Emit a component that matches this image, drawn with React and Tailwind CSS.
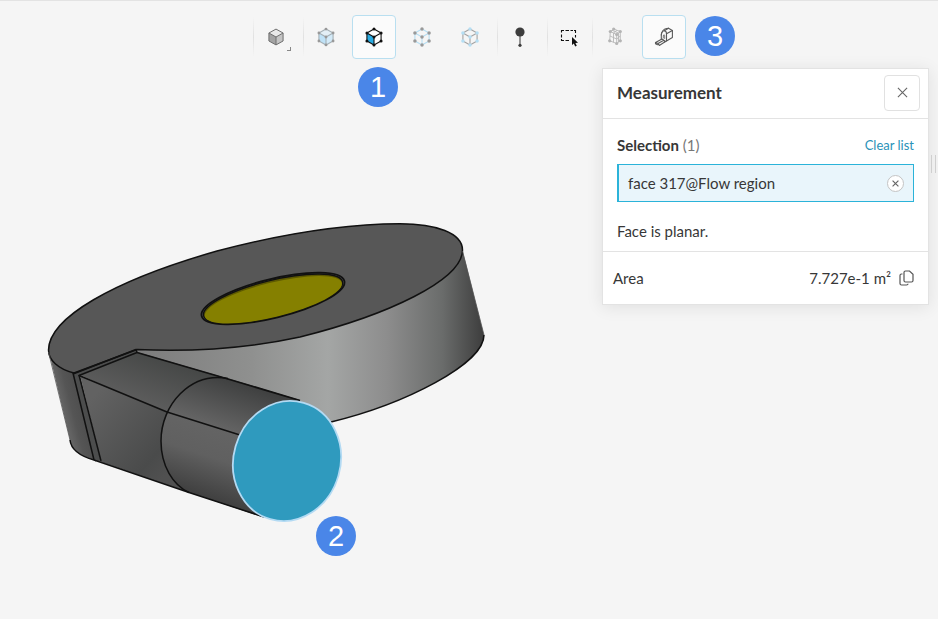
import React from "react";

const RIM =
  "M74 373C58 369 48.5 360 48.5 350C49 318 112 281 217 251C285 233 345 224 400 223.7C436 223.7 462.5 233 462.5 250C462.5 280 388 315 300 337C245 349 195 352 137 349.5Z";
const RING = "M228 378.5C190 372 161 405 161 441C161 466 173 485 189 492.5";

function Model() {
  return (
    <svg
      className="absolute left-10 top-[214px] h-[320px] w-[460px]"
      viewBox="40 215 460 320"
      role="img"
      aria-label="Flow region model"
    >
      <defs>
        <linearGradient id="wall" gradientUnits="userSpaceOnUse" x1="137" y1="0" x2="484" y2="0">
          <stop offset="0" stopColor="#7c7c7c" />
          <stop offset="0.33" stopColor="#8f908f" />
          <stop offset="0.55" stopColor="#a4a6a5" />
          <stop offset="0.72" stopColor="#8d8d8d" />
          <stop offset="0.88" stopColor="#6a6c6b" />
          <stop offset="1" stopColor="#3d3d3d" />
        </linearGradient>
        <linearGradient id="left" gradientUnits="userSpaceOnUse" x1="52" y1="410" x2="90" y2="400">
          <stop offset="0" stopColor="#777777" />
          <stop offset="0.5" stopColor="#555555" />
          <stop offset="1" stopColor="#484848" />
        </linearGradient>
        <linearGradient id="ductTop" gradientUnits="userSpaceOnUse" x1="185" y1="362" x2="165" y2="415">
          <stop offset="0" stopColor="#444645" />
          <stop offset="1" stopColor="#5e5e5e" />
        </linearGradient>
        <linearGradient id="ductSide" gradientUnits="userSpaceOnUse" x1="90" y1="400" x2="170" y2="470">
          <stop offset="0" stopColor="#626262" />
          <stop offset="0.8" stopColor="#4a4b4b" />
          <stop offset="1" stopColor="#505050" />
        </linearGradient>
        <linearGradient id="pipe" gradientUnits="userSpaceOnUse" x1="250" y1="387" x2="212" y2="502">
          <stop offset="0" stopColor="#404141" />
          <stop offset="0.4" stopColor="#646464" />
          <stop offset="0.65" stopColor="#606060" />
          <stop offset="1" stopColor="#3e3e3e" />
        </linearGradient>
      </defs>
      <path d="M137 349L462.5 250L484 335C484 364 405 404 331 422L290 410L137 355Z" fill="url(#wall)" />
      <path d="M48.5 350L70 440C71 450 80 456 94 460L96 462L74 373Z" fill="url(#left)" />
      <path d="M73 373L94 460L101 462L80 375L137 353L137 349Z" fill="#4c4d4d" />
      <path d="M80 375L137 352L228 378.5L193 390L167 414Z" fill="url(#ductTop)" />
      <path d="M80 375L167 412L175 440L189 492.5L101 462Z" fill="url(#ductSide)" />
      <path d={`${RING}L262 517L300 470L300 400Z`} fill="url(#pipe)" />
      <path d={RIM} fill="#575757" />
      <g fill="none" stroke="#111" strokeWidth="1.5" strokeLinejoin="round">
        <path d={RIM} />
        <path d="M484 335C484 364 405 404 331 422" />
        <path d="M70 440C71 450 80 456 94 460L189 492.5L264 517" />
        <path d={RING} />
        <path d="M73 374L136 349.5L137 352.5L79 375.5L167 412L240 435" />
        <path d="M73 373L94 460M79 375L101 461" />
        <path d="M137 352.5L228 379L300 400.5" strokeWidth="1.8" />
      </g>
      <path d="M48.5 352L70 440M462.5 251L484 335" fill="none" stroke="#555" strokeWidth="0.8" />
      <g transform="rotate(-13.8 273 298.5)">
        <ellipse cx="273" cy="298.5" rx="73.5" ry="19.5" fill="#555" stroke="#111" strokeWidth="1.8" />
        <ellipse cx="273" cy="298.8" rx="71.5" ry="18.5" fill="#5d5900" stroke="#111" strokeWidth="1.4" />
        <ellipse cx="273" cy="299.8" rx="70.5" ry="17.2" fill="#858000" />
      </g>
      <ellipse
        cx="287"
        cy="461"
        rx="53.5"
        ry="60.5"
        transform="rotate(16 287 461)"
        fill="#2f9abe"
        stroke="#b3daf3"
        strokeWidth="1.8"
      />
    </svg>
  );
}

const HEX = [[12, 2.5], [20.5, 7.2], [20.5, 16.8], [12, 21.5], [3.5, 16.8], [3.5, 7.2], [12, 12]];

function Cube({ line, dot, top = "none", left = "none", right = "none", r = 1.7, width = 1.3 }) {
  return (
    <svg className="size-5" viewBox="0 0 24 24" aria-hidden="true">
      <path d="M12 2.5L20.5 7.2L12 12L3.5 7.2Z" fill={top} />
      <path d="M3.5 7.2L12 12V21.5L3.5 16.8Z" fill={left} />
      <path d="M20.5 7.2L12 12V21.5L20.5 16.8Z" fill={right} />
      <path
        d="M12 2.5L20.5 7.2V16.8L12 21.5L3.5 16.8V7.2ZM3.5 7.2L12 12L20.5 7.2M12 12V21.5"
        fill="none"
        stroke={line}
        strokeWidth={width}
        strokeLinejoin="round"
      />
      {dot && HEX.map(([x, y]) => <circle key={`${x}-${y}`} cx={x} cy={y} r={r} fill={dot} />)}
    </svg>
  );
}

function PinIcon() {
  return (
    <svg className="h-5 w-3" viewBox="0 0 12 20" aria-hidden="true">
      <path d="M6 5V18" stroke="#444" strokeWidth="1.1" />
      <circle cx="6" cy="5" r="4.6" fill="#3d3d3d" />
      <circle cx="6" cy="18.3" r="1.6" fill="#3d3d3d" />
    </svg>
  );
}

function BoxSelectIcon() {
  return (
    <svg className="h-5 w-5" viewBox="0 0 20 20" aria-hidden="true">
      <path
        d="M1.5 5.500V3.500H4M5.500 3.500H9M10.500 3.500H13M14 3.500H15.500V6M15.500 8V10.500M1.500 7.500V10.500M1.500 12V13.500H4M5.500 13.500H9"
        stroke="#111"
        strokeWidth="1.1"
        fill="none"
      />
      <path d="M12 10V18L13.800 16.500L15.200 19.500L16.800 18.700L15.400 16L18 15.800Z" fill="#111" />
    </svg>
  );
}

function MeshIcon() {
  const dots = [[3.3, 4], [6.7, 1.5], [13.3, 4], [2.7, 13.3], [9.7, 16], [13.3, 13.3], [9.7, 7]];
  return (
    <svg className="h-5 w-4" viewBox="0 0 16 19" aria-hidden="true">
      <path
        d="M3.300 4L6.700 1.500L13.300 4L13.300 13.300L9.700 16L2.700 13.300ZM3.300 4L9.700 7L13.300 4M9.700 7V16M3 8.500L9.700 11.500L13.300 8.500M6.500 5.500V14.800M5 2.800L11.500 5.500V14.600M10 2.800L6.500 5.500"
        stroke="#b8b8b8"
        strokeWidth="0.9"
        fill="none"
      />
      {dots.map(([x, y]) => <circle key={`${x}-${y}`} cx={x} cy={y} r="1.6" fill="#b4b4b4" />)}
    </svg>
  );
}

function TapeIcon() {
  return (
    <svg className="size-5" viewBox="0 0 20 20" aria-hidden="true">
      <g fill="none" stroke="#5a5a5a" strokeWidth="1.1" strokeLinejoin="round" strokeLinecap="round">
        <path d="M7.300 12.500V8.300C7.300 5.500 8.700 3.800 10.300 3.800C12 3.800 12.500 5 12.500 7V14L10.300 15" />
        <path d="M7.300 8C7.500 5 9.500 2 12.500 1.500L14.500 1.200L18.400 3.500V10.500L12.500 14" />
        <path d="M10.300 3.800L14.500 1.200M12.500 6.800L18.400 3.500" />
        <path d="M9.300 11V9C9.300 7.300 10.700 7.300 10.700 8.700V11.500" strokeWidth="0.8" />
        <path d="M8 12L1.500 15.500L4 16.500L5.300 18.500L11.500 14.500L8 12M4 16.500L9.800 13.300M1.500 15.500V16.800L3.500 17.800" />
      </g>
    </svg>
  );
}

function Divider() {
  return <span className="h-10 w-px bg-linear-to-b from-[#f5f5f5] via-[#e1e1e1] to-[#f5f5f5]" />;
}

function Tool({ label, active = false, children }) {
  return (
    <button
      type="button"
      aria-label={label}
      aria-pressed={active}
      className={
        active
          ? "relative flex size-11 items-center justify-center rounded border border-[#b9dff0] bg-[#fbfbfb]"
          : "relative flex size-11 items-center justify-center rounded"
      }
    >
      {children}
    </button>
  );
}

function Badge({ className, children }) {
  return (
    <span
      className={`absolute flex size-10 items-center justify-center rounded-full bg-[#4a86e8] font-['Liberation_Sans',Arial,sans-serif] text-[29px] leading-10 text-white ${className}`}
    >
      {children}
    </span>
  );
}

function Toolbar() {
  return (
    <div role="toolbar" aria-label="Viewer tools" className="relative flex justify-center pt-[14px] pl-px">
      <div className="flex items-center pr-[5px]">
        <Divider />
        <Tool label="Shading">
          <Cube line="#6f6f6f" top="#e9e9e9" left="#a3a3a3" right="#c4c4c4" width={1.2} />
          <span className="absolute right-[7px] bottom-[8px] size-1 border-r border-b border-[#888]" />
        </Tool>
      </div>
      <div className="flex items-center pr-[5px]">
        <Divider />
        <div className="flex gap-1">
          <Tool label="Select volumes">
            <Cube line="#a5b0b6" dot="#999" top="#e3eff6" left="#bfe2f7" right="#d3eaf8" />
          </Tool>
          <div className="relative">
            <Tool label="Select faces" active>
              <Cube line="#111" dot="#111" top="#fff" left="#29abe2" right="#fff" r={1.8} />
            </Tool>
            <Badge className="top-[52px] left-[6px]">1</Badge>
          </div>
          <Tool label="Select vertices">
            <Cube line="#b5def3" dot="#999" r={2.1} />
          </Tool>
          <Tool label="Select edges">
            <Cube line="#a3a3a3" dot="#b5def3" r={2.1} />
          </Tool>
        </div>
      </div>
      <div className="flex items-center pr-[5px]">
        <Divider />
        <Tool label="Probe point">
          <PinIcon />
        </Tool>
      </div>
      <div className="flex items-center">
        <Divider />
        <Tool label="Box selection">
          <BoxSelectIcon />
        </Tool>
      </div>
      <div className="flex items-center">
        <Divider />
        <div className="flex gap-[5px]">
          <Tool label="Mesh">
            <MeshIcon />
          </Tool>
          <div className="relative">
            <Tool label="Measure" active>
              <TapeIcon />
            </Tool>
            <Badge className="top-px left-[53px]">3</Badge>
          </div>
        </div>
      </div>
    </div>
  );
}

function Cross({ className, width }) {
  return (
    <svg className={className} viewBox="0 0 12 12" fill="none" stroke="#666" strokeWidth={width} aria-hidden="true">
      <path d="M1 1L11 11M11 1L1 11" />
    </svg>
  );
}

function MeasurementPanel() {
  return (
    <section
      aria-labelledby="measurement-title"
      className="relative mt-[9px] mr-[9px] ml-auto w-[327px] border border-[#e3e3e3] bg-white text-[15px] leading-5 text-[#373737] shadow-[0_2px_16px_rgba(0,0,0,0.09)]"
    >
      <header className="flex h-[50px] items-center justify-between border-b border-[#e3e3e3] pr-2 pb-0.5 pl-[14px]">
        <h2 id="measurement-title" className="text-[17px] font-bold">
          Measurement
        </h2>
        <button
          type="button"
          aria-label="Close"
          className="flex size-9 items-center justify-center rounded border border-[#e1e1e1]"
        >
          <Cross className="size-[11px]" width={1.2} />
        </button>
      </header>
      <div className="border-b border-[#e3e3e3] px-[14px] pt-4 pb-[10px]">
        <div className="flex items-center justify-between">
          <h3>
            <span className="font-bold">Selection</span> <span className="text-[#777]">(1)</span>
          </h3>
          <button type="button" className="text-[13px] text-[#2a92b8]">
            Clear list
          </button>
        </div>
        <div className="mt-[9px] flex h-[38px] items-center justify-between border border-l-2 border-[#2bb3d9] bg-[#e9f5fb] pr-[9px] pl-[9px]">
          <span>face 317@Flow region</span>
          <button
            type="button"
            aria-label="Remove face 317@Flow region"
            className="flex size-[17px] items-center justify-center rounded-full border border-[#c4c4c4] bg-white"
          >
            <Cross className="size-[7px]" width={2} />
          </button>
        </div>
        <p className="mt-[19px]">Face is planar.</p>
      </div>
      <div className="flex h-[52px] items-center gap-2 pr-[14px] pl-[10px]">
        <dl className="flex flex-1 justify-between">
          <dt>Area</dt>
          <dd>7.727e-1 m²</dd>
        </dl>
        <button type="button" aria-label="Copy area">
          <svg className="h-4 w-[15px]" viewBox="0 0 15 16" fill="none" stroke="#555" strokeWidth="1.2" aria-hidden="true">
            <path d="M6.500 1H10.500L14 4.300V10.500Q14 12 12.500 12H6.500Q5 12 5 10.500V2.500Q5 1 6.500 1Z" />
            <path d="M3.500 4H2.500Q1 4 1 5.500V13.500Q1 15 2.500 15H7.500Q9 15 9 13.800" />
          </svg>
        </button>
      </div>
    </section>
  );
}

export default function App() {
  return (
    <main className="relative min-h-screen overflow-hidden border-t border-[#e3e3e3] bg-[#f5f5f5] font-[Lato,'Open_Sans',sans-serif]">
      <Model />
      <Badge className="top-[515px] left-[316px]">2</Badge>
      <Toolbar />
      <MeasurementPanel />
      <span className="absolute top-[154px] right-[2px] h-[18px] w-[5px] border-x border-[#cfcfcf]" />
    </main>
  );
}
